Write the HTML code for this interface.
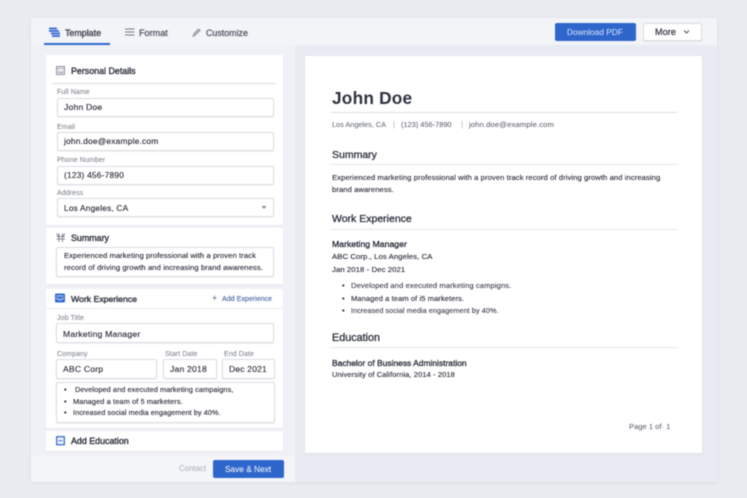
<!DOCTYPE html>
<html><head><meta charset="utf-8"><style>
*{box-sizing:border-box;margin:0;padding:0}
html,body{width:747px;height:498px;overflow:hidden;background:#ebecf2}
body{font-family:"Liberation Sans",sans-serif;position:relative}
#r{position:absolute;inset:0;filter:blur(.5px)}
#r div,#r span,#r svg{position:absolute}
.t{white-space:nowrap;line-height:12px;color:#2c303c}
.l{font-size:7px;color:#737783;letter-spacing:.1px}
.i{background:#fff;border:1px solid #d9dbe2;border-radius:2px;box-shadow:0 1px 1px #0000000d}
.v{font-size:8.6px;color:#20242f;letter-spacing:.2px;-webkit-text-stroke:.1px #20242f}
.c{background:#fff;box-shadow:0 1px 2px #0000000a}
.h{font-size:8.9px;color:#2b2f3b;-webkit-text-stroke:.35px #2b2f3b}
.s{font-size:7.5px;color:#252935;letter-spacing:.1px;-webkit-text-stroke:.12px #252935}
.b{-webkit-text-stroke:.3px currentColor}
.rule{height:1px;background:#dfe1e7}
</style></head><body><div id="r">
<div style="left:31px;top:18px;width:686px;height:464px;background:#e9ebf3;border-radius:2px;box-shadow:0 1px 5px #00000012"></div>
<div style="left:31px;top:18px;width:686px;height:27px;background:#f3f4f8;border-radius:2px 2px 0 0"></div>
<div style="left:31px;top:45px;width:264px;height:437px;background:#f0f1f7"></div>
<div style="left:31px;top:456px;width:264px;height:26px;background:#f4f5f9"></div>
<div style="left:44px;top:43px;width:66px;height:2px;background:#2f66cc"></div>

<svg style="left:48px;top:27px" width="13" height="11" viewBox="0 0 13 11"><path d="M1 1.500h8M1 4h10M3 6.500h9M4 9h8" stroke="#2f66cc" stroke-width="1.700" fill="none"/></svg>
<span class="t b" style="left:65px;top:26.500px;font-size:8.900px;color:#3c404d">Template</span>
<svg style="left:125px;top:28px" width="10" height="9" viewBox="0 0 10 9"><path d="M0 1h9.500M0 4h9.500M0 7h9.500" stroke="#777b86" stroke-width=".9" fill="none"/></svg>
<span class="t b" style="left:139px;top:26.500px;font-size:9.100px;color:#525662;-webkit-text-stroke-width:.25px">Format</span>
<svg style="left:192px;top:27px" width="10" height="11" viewBox="0 0 10 11"><path d="M1 9.500L2 6.500 6.500 2 8.200 3.500 3.500 8z" stroke="#80848f" stroke-width=".7" fill="#b5b8c0"/></svg>
<span class="t b" style="left:206px;top:26.500px;font-size:8.900px;color:#525662;-webkit-text-stroke-width:.25px">Customize</span>

<div style="left:555px;top:23px;width:81px;height:18px;background:#2f66cc;border-radius:2px"></div>
<span class="t" style="left:567px;top:26px;font-size:8.300px;color:#dbe5f7">Download PDF</span>
<div class="i" style="left:643px;top:23px;width:59px;height:18px;border-radius:2px"></div>
<span class="t b" style="left:655px;top:26px;font-size:9.200px;color:#40444f">More</span>
<svg style="left:683px;top:29px" width="7" height="6" viewBox="0 0 7 6"><path d="M1 1.500L3.500 4 6 1.500" stroke="#555965" stroke-width="1.100" fill="none"/></svg>

<!-- Personal -->
<div class="c" style="left:46px;top:55px;width:237px;height:170px"></div>
<svg style="left:56px;top:66px" width="10" height="10" viewBox="0 0 10 10"><rect x=".5" y=".5" width="8" height="8" fill="#f0f1f5" stroke="#777b87" stroke-width=".8"/><path d="M.5 2.500h8" stroke="#9ea1ab" stroke-width=".8"/><path d="M2.500 5v1.500h4V5" stroke="#777b87" stroke-width=".7" fill="none"/></svg>
<span class="t h" style="left:71px;top:65px">Personal Details</span>
<div class="rule" style="left:52px;top:83px;width:224px"></div>
<span class="t l" style="left:57px;top:86.500px">Full Name</span>
<div class="i" style="left:57px;top:98px;width:217px;height:19px"></div>
<span class="t v" style="left:64px;top:101px">John Doe</span>
<span class="t l" style="left:57px;top:121.500px">Email</span>
<div class="i" style="left:57px;top:132px;width:217px;height:19px"></div>
<span class="t v" style="left:64px;top:135px;font-size:8.400px">john.doe@example.com</span>
<span class="t l" style="left:57px;top:154.500px">Phone Number</span>
<div class="i" style="left:57px;top:165.500px;width:217px;height:19px"></div>
<span class="t v" style="left:64px;top:169px;font-size:8.400px">(123) 456-7890</span>
<span class="t l" style="left:57px;top:187.500px">Address</span>
<div class="i" style="left:57px;top:198px;width:217px;height:19px"></div>
<span class="t v" style="left:64px;top:201.500px;font-size:8.300px">Los Angeles, CA</span>
<svg style="left:261px;top:205px" width="6" height="5" viewBox="0 0 6 5"><path d="M.5 1h5L3 4z" fill="#8b8f9a"/></svg>

<!-- Summary -->
<div class="c" style="left:46px;top:228px;width:237px;height:56px"></div>
<svg style="left:56px;top:232.500px" width="10" height="10" viewBox="0 0 10 10"><path d="M3 .5v8.500M6.500.5v8.500M.5 3.500h8.500M.5 6h8.500M.5.5l2.500 3M9 .5L6.500 3.500" stroke="#6d717d" stroke-width=".8" fill="none"/></svg>
<span class="t h" style="left:71px;top:232px">Summary</span>
<div class="i" style="left:56px;top:247px;width:218px;height:30px"></div>
<span class="t s" style="left:64px;top:250px;font-size:7.600px">Experienced marketing professional with a proven track</span>
<span class="t s" style="left:64px;top:262px;font-size:7.600px">record of driving growth and increasing brand awareness.</span>

<!-- Work -->
<div class="c" style="left:46px;top:289px;width:237px;height:139px"></div>
<svg style="left:55px;top:293px" width="11" height="10" viewBox="0 0 11 10"><rect width="10" height="9" y=".5" rx="1" fill="#3a6fd0"/><path d="M1.500 3h7M1 5l4 2 4-2" stroke="#dfe8fa" stroke-width=".8" fill="none"/></svg>
<span class="t h" style="left:71px;top:292.500px;font-size:8.700px">Work Experience</span>
<span class="t" style="left:212px;top:292px;font-size:9px;color:#4b5d85">+</span>
<span class="t" style="left:222px;top:292.500px;font-size:7.100px;color:#3f5f9e;-webkit-text-stroke:.1px #3f5f9e">Add Experience</span>
<div class="rule" style="left:46px;top:308px;width:237px;background:#eceef2"></div>
<span class="t l" style="left:57px;top:312.500px">Job Title</span>
<div class="i" style="left:56px;top:323px;width:218px;height:20px"></div>
<span class="t v" style="left:63px;top:327.500px">Marketing Manager</span>
<span class="t l" style="left:57px;top:348.500px">Company</span>
<div class="i" style="left:56px;top:359px;width:101px;height:20px"></div>
<span class="t v" style="left:63px;top:363px">ABC Corp</span>
<span class="t l" style="left:165px;top:348.500px">Start Date</span>
<div class="i" style="left:163px;top:359px;width:54px;height:20px"></div>
<span class="t v" style="left:170px;top:363px">Jan 2018</span>
<span class="t l" style="left:224px;top:348.500px">End Date</span>
<div class="i" style="left:222px;top:359px;width:53px;height:20px"></div>
<span class="t v" style="left:229px;top:363px;font-size:8.500px">Dec 2021</span>
<div class="i" style="left:56px;top:382px;width:219px;height:41px"></div>
<span class="t s" style="left:64px;top:384px">•</span><span class="t s" style="left:75px;top:384px;font-size:7.300px">Developed and executed marketing campaigns,</span>
<span class="t s" style="left:64px;top:395.500px">•</span><span class="t s" style="left:73px;top:395.500px;font-size:7.400px">Managed a team of 5 marketers.</span>
<span class="t s" style="left:64px;top:407px">•</span><span class="t s" style="left:73px;top:407px;font-size:7.200px">Increased social media engagement by 40%.</span>

<!-- Education -->
<div class="c" style="left:46px;top:431px;width:237px;height:20px"></div>
<svg style="left:56px;top:436px" width="10" height="10" viewBox="0 0 10 10"><rect x=".7" y=".7" width="7.600" height="8" fill="#eef2fb" stroke="#3a6fd0" stroke-width="1.300"/><path d="M2.500 4.700h4" stroke="#3a6fd0"/></svg>
<span class="t h" style="left:71px;top:435px">Add Education</span>

<span class="t" style="left:179px;top:463px;font-size:7.800px;color:#a8abb4">Contact</span>
<div style="left:213px;top:460px;width:71px;height:18px;background:#2f66cc;border-radius:2px"></div>
<span class="t b" style="left:225px;top:463px;font-size:8.300px;color:#dbe5f7;-webkit-text-stroke-width:.15px">Save &amp; Next</span>

<!-- Paper -->
<div style="left:305px;top:56px;width:397px;height:397px;background:#fff;box-shadow:0 1px 3px #0000000d"></div>
<span class="t" style="left:332px;top:88px;font-size:17.300px;line-height:20px;font-weight:bold;color:#2e3240;letter-spacing:.2px">John Doe</span>
<div class="rule" style="left:331px;top:112px;width:346px"></div>
<span class="t" style="left:332px;top:119px;font-size:7.300px;color:#5c6070">Los Angeles, CA</span>
<span class="t" style="left:393px;top:119px;font-size:7.800px;color:#aaadb5">|</span>
<span class="t" style="left:401px;top:119px;font-size:7.400px;color:#525663">(123) 456-7890</span>
<span class="t" style="left:461px;top:119px;font-size:7.800px;color:#aaadb5">|</span>
<span class="t" style="left:469px;top:119px;font-size:7.700px;color:#525663;letter-spacing:.1px">john.doe@example.com</span>

<span class="t b" style="left:332px;top:148.500px;font-size:10.500px;color:#2b2f3b;line-height:13px">Summary</span>
<div class="rule" style="left:331px;top:164px;width:346px;background:#e6e7ec"></div>
<span class="t s" style="left:332px;top:172px;font-size:7.580px">Experienced marketing professional with a proven track record of driving growth and increasing</span>
<span class="t s" style="left:332px;top:184px;font-size:7.580px">brand awareness.</span>

<span class="t b" style="left:332px;top:213px;font-size:10.500px;color:#2b2f3b;line-height:13px">Work Experience</span>
<div class="rule" style="left:331px;top:229px;width:346px;background:#e6e7ec"></div>
<span class="t b" style="left:332px;top:238px;font-size:8.700px;color:#252935">Marketing Manager</span>
<span class="t s" style="left:332px;top:250.500px;font-size:7.700px">ABC Corp., Los Angeles, CA</span>
<span class="t s" style="left:332px;top:264px;font-size:7.700px">Jan 2018 - Dec 2021</span>
<span class="t s" style="left:342px;top:280px">•</span><span class="t s" style="left:351px;top:280px;font-size:7.600px;color:#3f4350;-webkit-text-stroke-color:#3f4350">Developed and executed marketing campigns.</span>
<span class="t s" style="left:342px;top:292.500px">•</span><span class="t s" style="left:351px;top:292.500px;font-size:7.500px">Managed a team of i5 marketers.</span>
<span class="t s" style="left:342px;top:305px">•</span><span class="t s" style="left:351px;top:305px;font-size:7.200px;color:#3f4350;-webkit-text-stroke-color:#3f4350">Increased social media engagement by 40%.</span>

<span class="t b" style="left:332px;top:331.500px;font-size:10.800px;color:#2b2f3b;line-height:13px">Education</span>
<div class="rule" style="left:331px;top:347px;width:346px;background:#e6e7ec"></div>
<span class="t b" style="left:332px;top:357px;font-size:8.450px;color:#252935">Bachelor of Business Administration</span>
<span class="t s" style="left:332px;top:369px">University of California, 2014 - 2018</span>
<span class="t" style="left:629px;top:421px;font-size:7.600px;color:#525663">Page 1 of· 1</span>
</div></body></html>
